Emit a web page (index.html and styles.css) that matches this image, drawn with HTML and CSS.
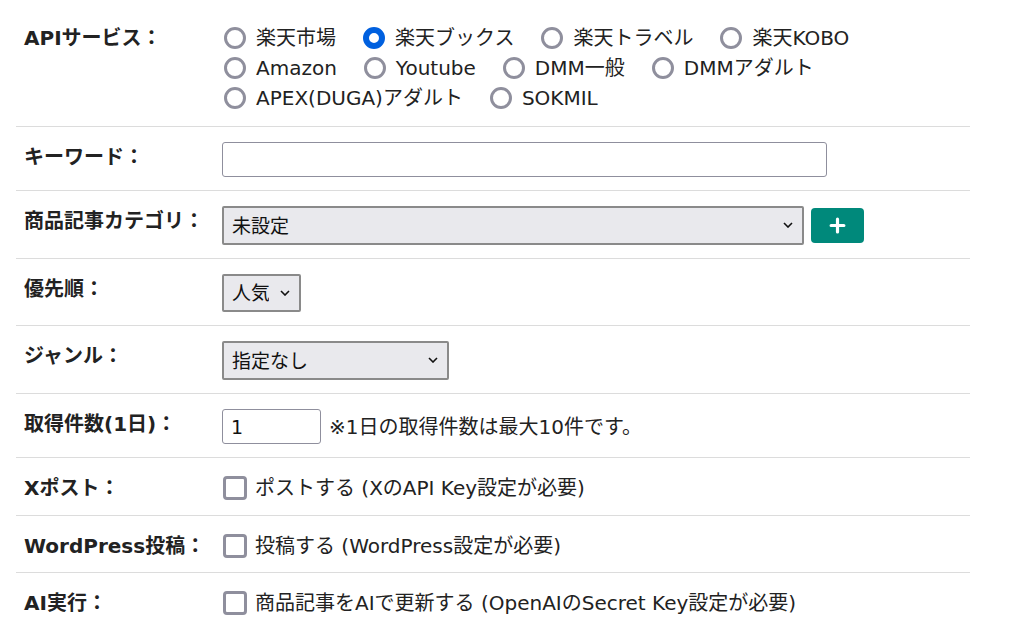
FILE: index.html
```html
<!DOCTYPE html>
<html lang="ja">
<head>
  <meta charset="utf-8">
  <title>商品記事設定</title>
  <link rel="stylesheet" href="styles.css">
</head>
<body>
<div class="wrap">
<table class="form-table">
  <tr>
    <th>APIサービス：</th>
    <td>
      <div class="radios">
        <label class="opt"><input type="radio" name="api"> 楽天市場</label>
        <label class="opt"><input type="radio" name="api" checked> 楽天ブックス</label>
        <label class="opt"><input type="radio" name="api"> 楽天トラベル</label>
        <label class="opt"><input type="radio" name="api"> 楽天KOBO</label>
        <label class="opt"><input type="radio" name="api"> Amazon</label>
        <label class="opt"><input type="radio" name="api"> Youtube</label>
        <label class="opt"><input type="radio" name="api"> DMM一般</label>
        <label class="opt"><input type="radio" name="api"> DMMアダルト</label>
        <label class="opt"><input type="radio" name="api"> APEX(DUGA)アダルト</label>
        <label class="opt"><input type="radio" name="api"> SOKMIL</label>
      </div>
    </td>
  </tr>
  <tr>
    <th>キーワード：</th>
    <td><input type="text" class="txt keyword"></td>
  </tr>
  <tr>
    <th>商品記事カテゴリ：</th>
    <td>
      <div class="inline">
        <span class="sel sel-cat"><select><option>未設定</option></select><svg class="chev" viewBox="0 0 10 6"><path d="M1 1l4 4 4-4" fill="none" stroke="#111" stroke-width="1.6"/></svg></span>
        <button class="add-btn" type="button"><svg viewBox="0 0 16 16"><path d="M8 2v12M2 8h12" stroke="#fff" stroke-width="3" stroke-linecap="round"/></svg></button>
      </div>
    </td>
  </tr>
  <tr>
    <th>優先順：</th>
    <td><span class="sel sel-order"><select><option>人気</option></select><svg class="chev" viewBox="0 0 10 6"><path d="M1 1l4 4 4-4" fill="none" stroke="#111" stroke-width="1.6"/></svg></span></td>
  </tr>
  <tr>
    <th>ジャンル：</th>
    <td><span class="sel sel-genre"><select><option>指定なし</option></select><svg class="chev" viewBox="0 0 10 6"><path d="M1 1l4 4 4-4" fill="none" stroke="#111" stroke-width="1.6"/></svg></span></td>
  </tr>
  <tr>
    <th>取得件数(1日)：</th>
    <td><div class="inline"><input type="text" class="txt count" value="1"><span class="note">※1日の取得件数は最大10件です。</span></div></td>
  </tr>
  <tr class="check-row">
    <th>Xポスト：</th>
    <td><label class="opt check"><input type="checkbox"> ポストする (XのAPI Key設定が必要)</label></td>
  </tr>
  <tr class="check-row tight">
    <th>WordPress投稿：</th>
    <td><label class="opt check"><input type="checkbox"> 投稿する (WordPress設定が必要)</label></td>
  </tr>
  <tr class="check-row">
    <th>AI実行：</th>
    <td><label class="opt check"><input type="checkbox"> 商品記事をAIで更新する (OpenAIのSecret Key設定が必要)</label></td>
  </tr>
</table>
</div>
</body>
</html>
```

FILE: styles.css
```css
html, body {
  margin: 0;
  background: #fff;
}
body {
  font-family: "DejaVu Sans", "Noto Sans CJK JP", sans-serif;
  font-size: 20px;
  color: #222;
  overflow: hidden;
}
.wrap {
  padding: 8px 16px;
}
.form-table {
  border-collapse: collapse;
  width: 954px;
}
.form-table th,
.form-table td {
  padding: 15px 0 13px 8px;
  border-bottom: 1px solid #dcdcdc;
  vertical-align: top;
  line-height: 30px;
  text-align: left;
}
.form-table th {
  width: 198px;
  font-weight: bold;
  white-space: nowrap;
}
.form-table td {
  padding-left: 0;
}
.form-table .check-row th,
.form-table .check-row td { padding-bottom: 12px; }
.form-table .check-row.tight th,
.form-table .check-row.tight td { padding-bottom: 11px; }
.form-table tr:last-child th,
.form-table tr:last-child td { border-bottom: none; }

.radios {
  display: flex;
  flex-wrap: wrap;
  column-gap: 27px;
  max-width: 700px;
  padding-left: 2px;
}
.opt {
  display: inline-flex;
  align-items: center;
  white-space: nowrap;
  height: 30px;
}
.opt.check { display: flex; }
.opt input {
  appearance: none;
  margin: 0 10px 0 0;
  flex: none;
}
.opt input[type=radio] {
  width: 22px;
  height: 22px;
  border: 3px solid #8f8f9d;
  border-radius: 50%;
  box-sizing: border-box;
}
.opt input[type=radio]:checked {
  border: 6px solid #0060df;
  background: #fff;
  box-shadow: inset 0 0 0 2px #fff;
}
.opt input[type=checkbox] {
  width: 24px;
  height: 24px;
  border: 3px solid #8f8f9d;
  border-radius: 4px;
  box-sizing: border-box;
  margin-left: 1px;
  margin-right: 8px;
}

.txt {
  font: inherit;
  font-size: 19px;
  height: 35px;
  box-sizing: border-box;
  border: 1px solid #8f8f9d;
  border-radius: 3px;
  padding: 0 8px;
  color: #111;
  display: block;
}
.keyword { width: 605px; }
.count { width: 99px; }
.note { margin-left: 1px; }
.inline {
  display: flex;
  align-items: center;
  gap: 7px;
}

.sel {
  position: relative;
  display: inline-block;
  vertical-align: top;
}
.sel select {
  appearance: none;
  font: inherit;
  font-size: 19px;
  color: #111;
  height: 39px;
  box-sizing: border-box;
  border: 2px solid #8a8a8a;
  border-radius: 2px;
  background: #e9e9ed;
  padding: 0 30px 0 8px;
  display: block;
}
.sel .chev {
  position: absolute;
  right: 11px;
  top: 16px;
  width: 10px;
  height: 6px;
  pointer-events: none;
}
.sel-cat select { width: 582px; }
.sel-order select { width: 79px; height: 38px; }
.sel-genre select { width: 227px; }

.add-btn {
  width: 53px;
  height: 35px;
  border: none;
  border-radius: 4px;
  background: #00897b;
  display: flex;
  align-items: center;
  justify-content: center;
  padding: 0;
}
.add-btn svg { width: 17px; height: 17px; }
```
